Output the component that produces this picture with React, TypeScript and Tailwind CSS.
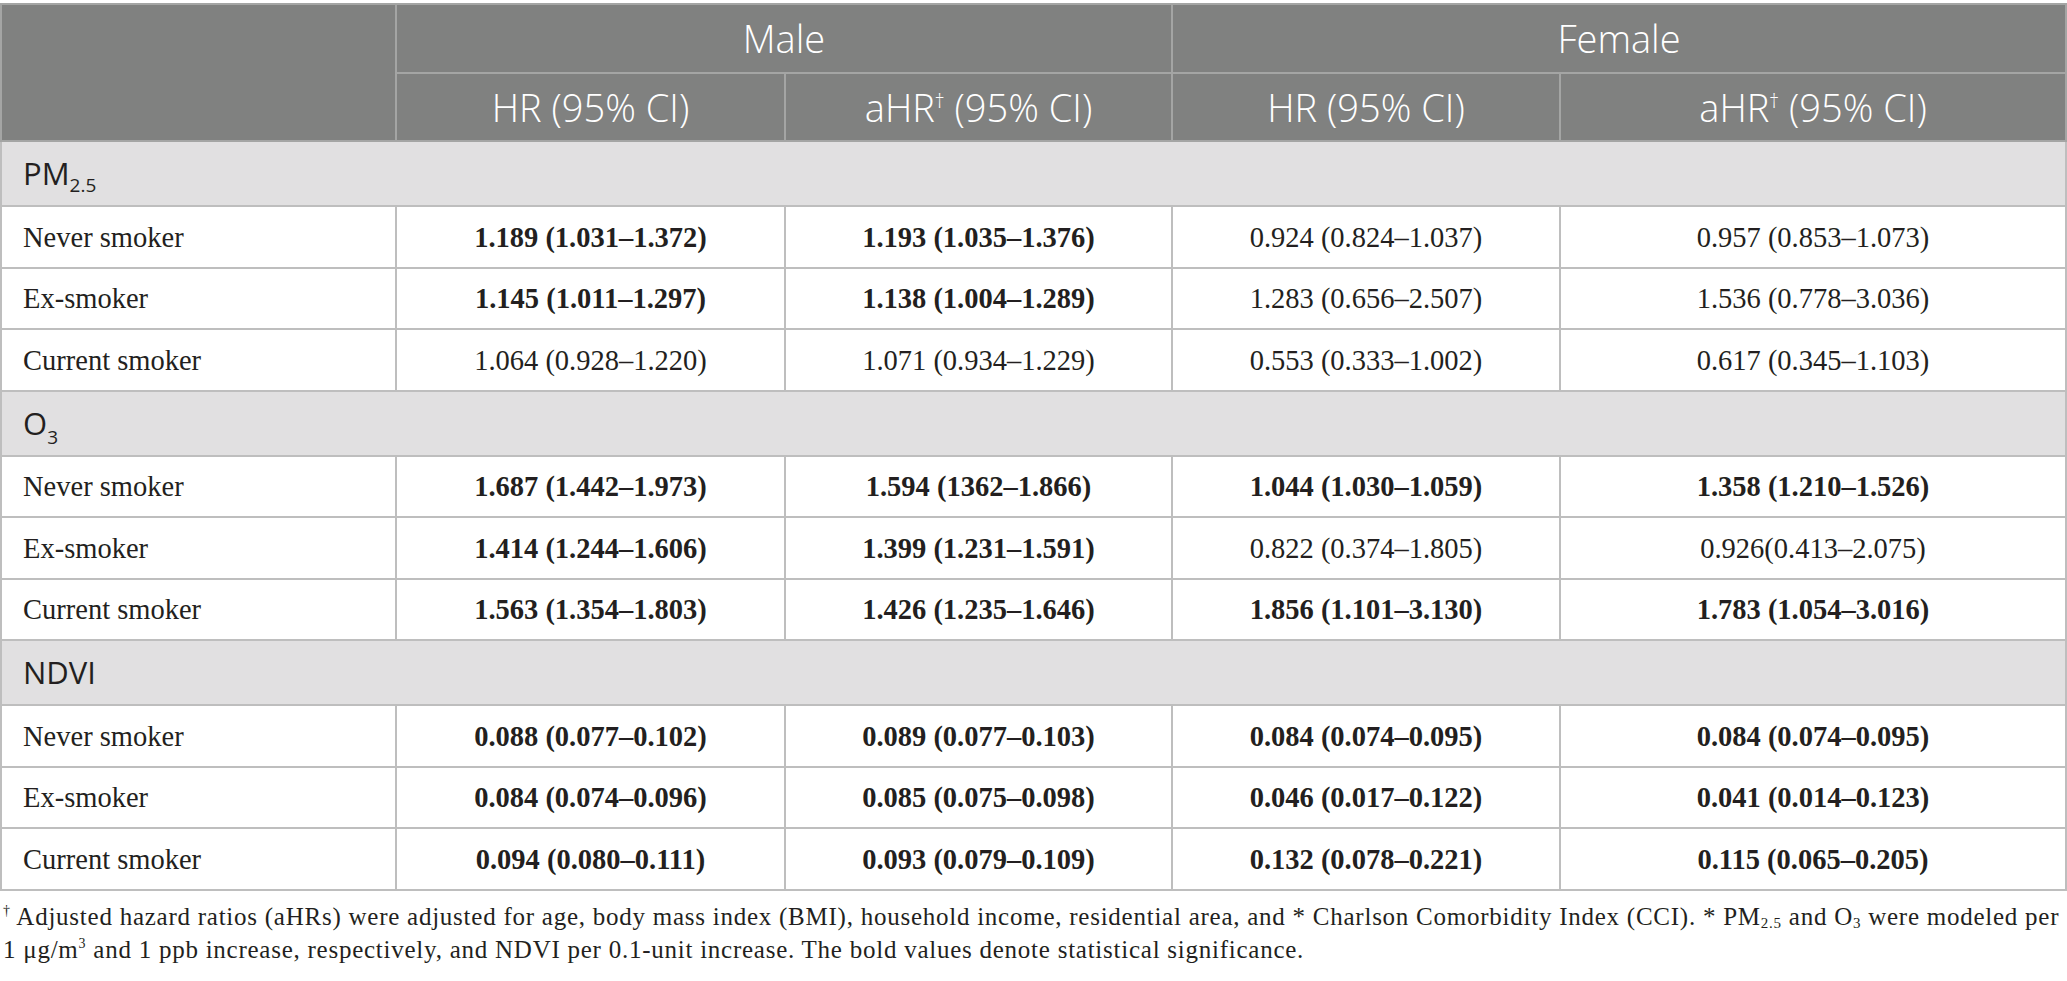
const serif = "font-['Liberation_Serif','Times_New_Roman',serif]"
const sans = "font-['Open_Sans','Noto_Sans',sans-serif]"

type Cell = { v: string; b?: boolean }

interface Group {
  label: React.ReactNode
  rows: { name: string; cells: Cell[] }[]
}

const groups: Group[] = [
  {
    label: (
      <>
        PM<sub className="text-[19px] -bottom-[7px]">2.5</sub>
      </>
    ),
    rows: [
      {
        name: 'Never smoker',
        cells: [
          { v: '1.189 (1.031–1.372)', b: true },
          { v: '1.193 (1.035–1.376)', b: true },
          { v: '0.924 (0.824–1.037)' },
          { v: '0.957 (0.853–1.073)' },
        ],
      },
      {
        name: 'Ex-smoker',
        cells: [
          { v: '1.145 (1.011–1.297)', b: true },
          { v: '1.138 (1.004–1.289)', b: true },
          { v: '1.283 (0.656–2.507)' },
          { v: '1.536 (0.778–3.036)' },
        ],
      },
      {
        name: 'Current smoker',
        cells: [
          { v: '1.064 (0.928–1.220)' },
          { v: '1.071 (0.934–1.229)' },
          { v: '0.553 (0.333–1.002)' },
          { v: '0.617 (0.345–1.103)' },
        ],
      },
    ],
  },
  {
    label: (
      <>
        O<sub className="text-[19px] -bottom-[9px]">3</sub>
      </>
    ),
    rows: [
      {
        name: 'Never smoker',
        cells: [
          { v: '1.687 (1.442–1.973)', b: true },
          { v: '1.594 (1362–1.866)', b: true },
          { v: '1.044 (1.030–1.059)', b: true },
          { v: '1.358 (1.210–1.526)', b: true },
        ],
      },
      {
        name: 'Ex-smoker',
        cells: [
          { v: '1.414 (1.244–1.606)', b: true },
          { v: '1.399 (1.231–1.591)', b: true },
          { v: '0.822 (0.374–1.805)' },
          { v: '0.926(0.413–2.075)' },
        ],
      },
      {
        name: 'Current smoker',
        cells: [
          { v: '1.563 (1.354–1.803)', b: true },
          { v: '1.426 (1.235–1.646)', b: true },
          { v: '1.856 (1.101–3.130)', b: true },
          { v: '1.783 (1.054–3.016)', b: true },
        ],
      },
    ],
  },
  {
    label: 'NDVI',
    rows: [
      {
        name: 'Never smoker',
        cells: [
          { v: '0.088 (0.077–0.102)', b: true },
          { v: '0.089 (0.077–0.103)', b: true },
          { v: '0.084 (0.074–0.095)', b: true },
          { v: '0.084 (0.074–0.095)', b: true },
        ],
      },
      {
        name: 'Ex-smoker',
        cells: [
          { v: '0.084 (0.074–0.096)', b: true },
          { v: '0.085 (0.075–0.098)', b: true },
          { v: '0.046 (0.017–0.122)', b: true },
          { v: '0.041 (0.014–0.123)', b: true },
        ],
      },
      {
        name: 'Current smoker',
        cells: [
          { v: '0.094 (0.080–0.111)', b: true },
          { v: '0.093 (0.079–0.109)', b: true },
          { v: '0.132 (0.078–0.221)', b: true },
          { v: '0.115 (0.065–0.205)', b: true },
        ],
      },
    ],
  },
]

export default function App() {
  return (
    <div className="w-[2067px] bg-white pt-[3px] text-[#231f20]">
      <table className="w-[2067px] table-fixed border-collapse border-2 border-[#c4c4c4]">
        <colgroup>
          <col className="w-[395px]" />
          <col className="w-[389px]" />
          <col className="w-[387px]" />
          <col className="w-[388px]" />
          <col />
        </colgroup>
        <thead className={`${sans} font-light text-white text-[38px] bg-[#808180]`}>
          <tr className="h-[69px]">
            <th rowSpan={2} className="border-2 border-[#a4a5a4] font-light" />
            <th colSpan={2} className="border-2 border-[#a4a5a4] font-light">
              Male
            </th>
            <th colSpan={2} className="border-2 border-[#a4a5a4] font-light">
              Female
            </th>
          </tr>
          <tr className="h-[68px]">
            <th className="border-2 border-[#a4a5a4] font-light">HR (95% CI)</th>
            <th className="border-2 border-[#a4a5a4] font-light">
              aHR<sup className="text-[20px] -top-[14px]">†</sup> (95% CI)
            </th>
            <th className="border-2 border-[#a4a5a4] font-light">HR (95% CI)</th>
            <th className="border-2 border-[#a4a5a4] font-light">
              aHR<sup className="text-[20px] -top-[14px]">†</sup> (95% CI)
            </th>
          </tr>
        </thead>
        <tbody>
          {groups.map((g, gi) => (
            <Section key={gi} group={g} />
          ))}
        </tbody>
      </table>
      <div className={`${serif} text-[25px] tracking-[0.75px] leading-[33px] pl-[3px] pt-[9px] text-[#231f20]`}>
        <div className="whitespace-nowrap">
          <sup className="text-[14px] -top-[10px]">†</sup> Adjusted hazard ratios (aHRs) were adjusted for age, body mass
          index (BMI), household income, residential area, and * Charlson Comorbidity Index (CCI). * PM
          <sub className="text-[15px]">2.5</sub> and O<sub className="text-[15px]">3</sub> were modeled per
        </div>
        <div className="whitespace-nowrap">
          1 μg/m<sup className="text-[14px] -top-[10px]">3</sup> and 1 ppb increase, respectively, and NDVI per
          0.1-unit increase. The bold values denote statistical significance.
        </div>
      </div>
    </div>
  )
}

function Section({ group }: { group: Group }) {
  return (
    <>
      <tr className="h-[65px] bg-[#e1e0e1]">
        <td colSpan={5} className={`${sans} text-[31px] pl-[21px] border-2 border-[#bebebe]`}>
          {group.label}
        </td>
      </tr>
      {group.rows.map((r) => (
        <tr key={r.name} className={`h-[61.5px] ${serif} text-[28.5px]`}>
          <td className="pl-[21px] pt-[3px] border-2 border-[#bebebe]">{r.name}</td>
          {r.cells.map((c, i) => (
            <td key={i} className={`text-center pt-[3px] border-2 border-[#bebebe] ${c.b ? 'font-bold' : ''}`}>
              {c.v}
            </td>
          ))}
        </tr>
      ))}
    </>
  )
}
